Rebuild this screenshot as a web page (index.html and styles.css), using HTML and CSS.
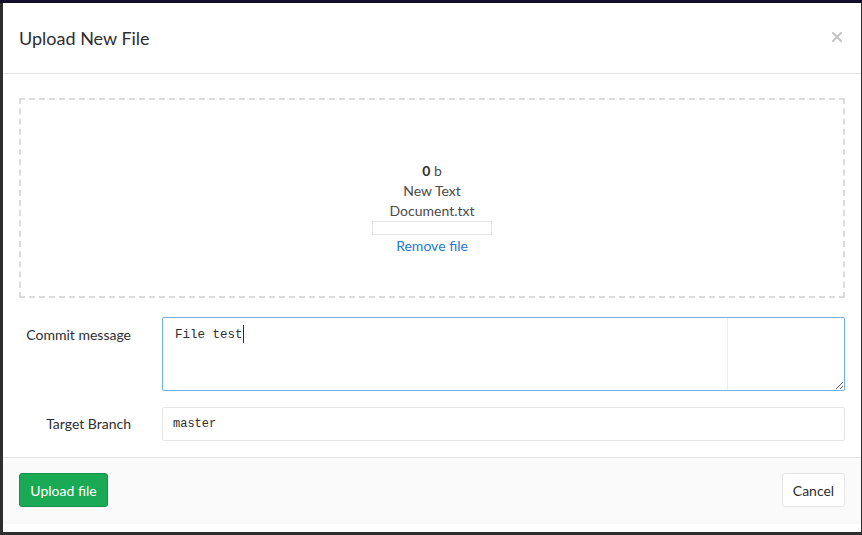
FILE: index.html
```html
<!DOCTYPE html>
<html>
<head>
<meta charset="utf-8">
<title>Upload New File</title>
<link rel="stylesheet" href="styles.css">
</head>
<body>
<div class="frame">
  <div class="modal">
    <div class="modal-header">
      <h3 class="modal-title">Upload New File</h3>
      <button class="close" aria-label="Close">
        <svg width="10" height="10" viewBox="0 0 10 10"><path d="M1 1L9 9M9 1L1 9" stroke="#c4c4c4" stroke-width="2" stroke-linecap="square"/></svg>
      </button>
    </div>
    <div class="modal-body">
      <div class="dropzone">
        <div class="preview">
          <div class="size"><strong>0</strong> b</div>
          <div class="filename">New Text Document.txt</div>
          <div class="progress"></div>
          <a class="remove" href="#">Remove file</a>
        </div>
      </div>
      <div class="form">
        <label class="label label-top">Commit message</label>
        <div class="textarea-wrap">
          <textarea class="commit">File test</textarea>
          <span class="caret"></span>
        </div>
        <label class="label">Target Branch</label>
        <input class="branch" type="text" value="master">
      </div>
    </div>
    <div class="modal-footer">
      <button class="btn btn-success">Upload file</button>
      <button class="btn btn-cancel">Cancel</button>
    </div>
  </div>
</div>
</body>
</html>
```

FILE: styles.css
```css
* { box-sizing: border-box; }
html, body { margin: 0; padding: 0; }
body {
  width: 862px;
  height: 535px;
  background: #2e2e2e;
  font-family: "Lato", "Noto Sans", sans-serif;
  font-size: 14px;
  color: #2e2e2e;
  overflow: hidden;
}
.frame {
  border-top: 3px solid #10102a;
  padding: 0 1px 3px 3px;
  height: 535px;
}
.modal {
  background: #fff;
  height: 529px;
  display: flex;
  flex-direction: column;
}
.modal-header {
  height: 71px;
  border-bottom: 1px solid #e5e5e5;
  display: flex;
  align-items: center;
  justify-content: space-between;
  padding: 0 16px 0 16px;
}
.modal-title {
  margin: 0;
  font-size: 18px;
  font-weight: 400;
  color: #2e2e2e;
}
.close {
  background: none;
  border: 0;
  padding: 0;
  margin: 0 3px 2px 0;
  display: flex;
  cursor: pointer;
}
.modal-body {
  padding: 24px 16px 16px 16px;
}
.dropzone {
  border: 2px dashed #dcdcdc;
  height: 200px;
  display: flex;
  justify-content: center;
  padding-top: 61px;
}
.preview {
  width: 120px;
  text-align: center;
  line-height: 20px;
  color: #4a4a4a;
}
.size strong { color: #2e2e2e; font-weight: 700; }
.progress {
  height: 14px;
  border: 1px solid #e5e5e5;
}
.remove {
  display: block;
  color: #1f78d1;
  text-decoration: none;
  margin-top: 1px;
}
.form {
  margin-top: 19px;
  display: grid;
  grid-template-columns: 112px 1fr;
  column-gap: 31px;
  row-gap: 16px;
}
.label {
  text-align: right;
  align-self: center;
  color: #2e2e2e;
  padding-bottom: 1px;
}
.label-top {
  align-self: start;
  padding-top: 9px;
  padding-bottom: 0;
}
.textarea-wrap {
  position: relative;
  height: 74px;
}
.textarea-wrap::after {
  content: "";
  position: absolute;
  left: 565px;
  top: 1px;
  bottom: 1px;
  width: 1px;
  background: #eeeeee;
}
.commit {
  display: block;
  width: 100%;
  height: 74px;
  border: 1px solid #73afea;
  border-radius: 2px;
  padding: 8px 12px 6px;
  font-family: "Liberation Mono", "DejaVu Sans Mono", monospace;
  font-size: 12.5px;
  line-height: 18px;
  color: #2e2e2e;
  resize: vertical;
  outline: none;
  background: #fff;
}
.caret {
  position: absolute;
  left: 81px;
  top: 8px;
  width: 1px;
  height: 18px;
  background: #2e2e2e;
}
.branch {
  display: block;
  width: 100%;
  height: 34px;
  border: 1px solid #e5e5e5;
  border-radius: 2px;
  padding: 0 10px;
  font-family: "Liberation Mono", "DejaVu Sans Mono", monospace;
  font-size: 12px;
  color: #2e2e2e;
  background: #fff;
  outline: none;
}
.modal-footer {
  border-top: 1px solid #e5e5e5;
  background: #fafafa;
  height: 67px;
  padding: 15px 16px 16px;
  display: flex;
  justify-content: space-between;
  align-items: flex-start;
}
.btn {
  height: 34px;
  border-radius: 3px;
  font-family: inherit;
  font-size: 14px;
  padding: 0;
  white-space: nowrap;
  cursor: pointer;
}
.btn-success {
  background: #1aaa55;
  border: 1px solid #168f48;
  color: #fff;
  width: 89px;
}
.btn-cancel {
  background: #fff;
  border: 1px solid #e5e5e5;
  color: #2e2e2e;
  width: 63px;
}
```
